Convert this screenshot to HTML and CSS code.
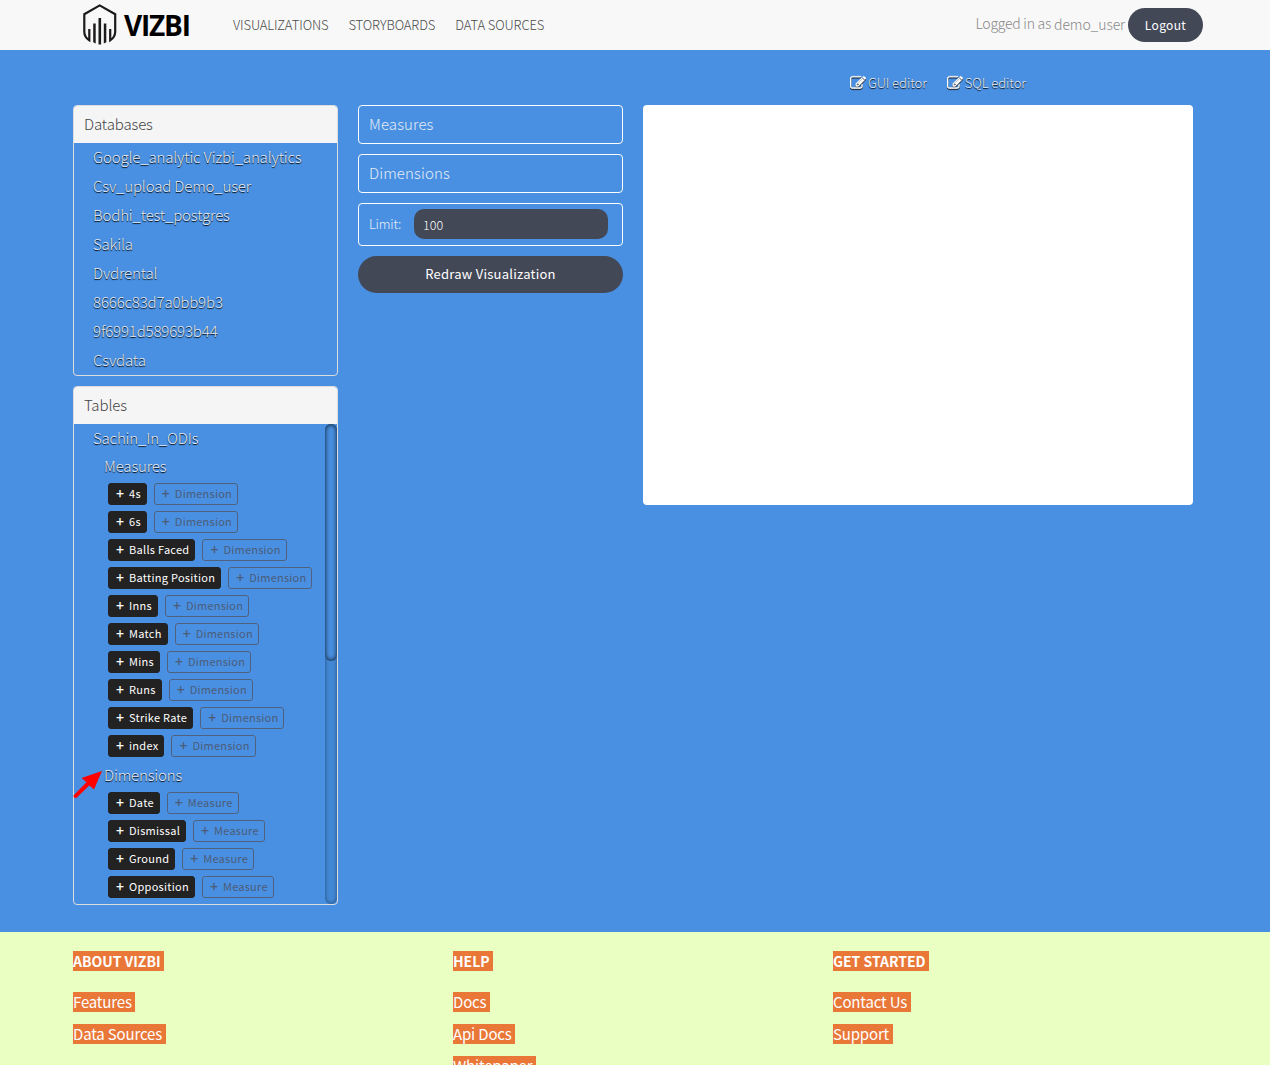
FILE: index.html
```html
<!DOCTYPE html>
<html lang="en">
<head>
<meta charset="utf-8">
<title>VIZBI</title>
<link rel="stylesheet" href="styles.css">
</head>
<body>
<svg class="defs" width="0" height="0">
  <symbol id="edit" viewBox="0 0 1792 1792"><path d="M888 1184l116-116-152-152-116 116v56h96v96h56zm440-720q-16-16-33 1l-350 350q-17 17-1 33t33-1l350-350q17-17 1-33zm80 594v190q0 119-84.500 203.500t-203.500 84.500h-832q-119 0-203.500-84.500t-84.500-203.500v-832q0-119 84.500-203.500t203.500-84.500h832q63 0 117 25 15 7 18 23 3 17-9 29l-49 49q-14 14-32 8-23-6-45-6h-832q-66 0-113 47t-47 113v832q0 66 47 113t113 47h832q66 0 113-47t47-113v-126q0-13 9-22l64-64q15-15 35-7t20 29zm-96-738l288 288-672 672h-288v-288zm444 132l-92 92-288-288 92-92q28-28 68-28t68 28l152 152q28 28 28 68t-28 68z"/></symbol>
</svg>
<header class="topbar">
  <div class="container topbar-inner">
    <a class="brand">
      <svg class="brand-mark" width="34" height="41" viewBox="0 0 34 41">
        <path d="M6.300 25v11.300Q1.500 33.500 1.300 28V10.200L16.700 1.400 32.200 10.200V28Q32 33.500 27.200 36.300V25" fill="none" stroke="#1d1a1b" stroke-width="2.200"/>
        <g fill="#1d1a1b"><path d="M10.200 19.500h2.500v20l-2.500-1.300z"/><path d="M15.500 14h2.600v26.500h-2.600z"/><path d="M20.800 19.500h2.500v18.700l-2.500 1.300z"/></g>
      </svg>
      <span class="brand-name">VIZBI</span>
    </a>
    <nav class="menu"><a>VISUALIZATIONS</a><a>STORYBOARDS</a><a>DATA SOURCES</a></nav>
    <div class="account"><span class="status">Logged in as</span><span class="user">demo_user</span><button class="pill logout">Logout</button></div>
  </div>
</header>
<main class="workspace">
  <div class="container">
    <div class="editors">
      <a><svg class="icon"><use href="#edit"/></svg>GUI editor</a>
      <a><svg class="icon"><use href="#edit"/></svg>SQL editor</a>
    </div>
    <div class="columns">
      <div class="side">
        <section class="panel">
          <h2>Databases</h2>
          <ul class="links">
            <li>Google_analytic Vizbi_analytics</li><li>Csv_upload Demo_user</li><li>Bodhi_test_postgres</li><li>Sakila</li><li>Dvdrental</li><li>8666c83d7a0bb9b3</li><li>9f6991d589693b44</li><li>Csvdata</li>
          </ul>
        </section>
        <section class="panel tables">
          <h2>Tables</h2>
          <div class="scroller">
            <div class="tree">
              <div class="table-name">Sachin_In_ODIs</div>
              <div class="group">Measures</div>
              <div class="field"><b>4s</b><i>Dimension</i></div>
              <div class="field"><b>6s</b><i>Dimension</i></div>
              <div class="field"><b>Balls Faced</b><i>Dimension</i></div>
              <div class="field"><b>Batting Position</b><i>Dimension</i></div>
              <div class="field"><b>Inns</b><i>Dimension</i></div>
              <div class="field"><b>Match</b><i>Dimension</i></div>
              <div class="field"><b>Mins</b><i>Dimension</i></div>
              <div class="field"><b>Runs</b><i>Dimension</i></div>
              <div class="field"><b>Strike Rate</b><i>Dimension</i></div>
              <div class="field"><b>index</b><i>Dimension</i></div>
              <div class="group second">Dimensions</div>
              <div class="field"><b>Date</b><i>Measure</i></div>
              <div class="field"><b>Dismissal</b><i>Measure</i></div>
              <div class="field"><b>Ground</b><i>Measure</i></div>
              <div class="field"><b>Opposition</b><i>Measure</i></div>
            </div>
            <div class="track"><div class="thumb"></div></div>
          </div>
          <svg class="arrow" width="32" height="30" viewBox="0 0 32 30"><path d="M29 1L8.500 8l5 4.200L.5 25.500q-.300 2.500 2.800 2.500L16.300 15.500l4.700 4z" fill="#f00"/></svg>
        </section>
      </div>
      <div class="controls">
        <div class="drop">Measures</div>
        <div class="drop">Dimensions</div>
        <label class="limit"><span>Limit:</span><input value="100"></label>
        <button class="pill redraw">Redraw Visualization</button>
      </div>
      <div class="canvas"></div>
    </div>
  </div>
</main>
<footer class="footer">
  <div class="container footer-grid">
    <div><h3><mark>ABOUT VIZBI</mark></h3><p><mark>Features</mark></p><p><mark>Data Sources</mark></p></div>
    <div><h3><mark>HELP</mark></h3><p><mark>Docs</mark></p><p><mark>Api Docs</mark></p><p><mark>Whitepaper</mark></p></div>
    <div><h3><mark>GET STARTED</mark></h3><p><mark>Contact Us</mark></p><p><mark>Support</mark></p></div>
  </div>
</footer>
</body>
</html>
```
FILE: styles.css
```css
* { box-sizing: border-box; }
body { margin: 0; height: 1065px; overflow: hidden; background: #eaffc2; font-family: "Noto Sans CJK SC", sans-serif; font-weight: 300; display: flex; flex-direction: column; }
.defs { position: absolute; }
h2, h3, p, ul { margin: 0; padding: 0; list-style: none; }
button, input { font-family: inherit; border: 0; margin: 0; }
.container { width: 1120px; margin-left: 73px; }
.topbar { height: 50px; flex: none; background: #f8f8f8; }
.topbar-inner { display: flex; align-items: center; height: 50px; }
.brand { display: flex; align-items: center; gap: 7px; margin-left: 10px; width: 150px; height: 50px; }
.brand-mark { margin-top: -1px; }
.brand-name { font-family: "Open Sans", "Noto Sans", sans-serif; font-size: 28px; font-weight: 700; line-height: 48px; color: #000; letter-spacing: -1.2px; }
.menu { display: flex; gap: 20px; font-size: 13px; line-height: 50px; color: #4a4a4a; letter-spacing: -.11px; }
.account { display: flex; align-items: center; margin-left: auto; margin-right: -10px; font-size: 14px; color: #888; line-height: 20px; }
.status { margin-right: 3px; padding-bottom: 4px; letter-spacing: -.25px; }
.user { margin-right: 3px; padding-bottom: 2px; letter-spacing: -.1px; }
.pill { background: #434857; color: #fff; border-radius: 19px; font-weight: 400; padding: 0; text-align: center; }
.logout { width: 75px; height: 34px; font-size: 12px; letter-spacing: .35px; padding-bottom: 1px; }
.workspace { height: 882px; flex: none; background: #4990e2; }
.editors { display: flex; gap: 20px; margin-left: 777px; height: 55px; padding-top: 10px; align-items: center; font-size: 13px; line-height: 20px; letter-spacing: -.05px; color: #e4ecf6; text-shadow: 0 1px 1px #000; }
.editors a { display: flex; align-items: center; }
.icon { width: 16px; height: 16px; margin-right: 2px; fill: #fff; stroke: #fff; stroke-width: 40; filter: drop-shadow(0 1px 0 #111); }
.columns { display: grid; grid-template-columns: 265px 265px 550px; gap: 20px; align-items: start; }
.side { display: grid; gap: 10px; }
.panel { border: 1px solid #ddd; border-radius: 4px; position: relative; }
.panel h2 { height: 37px; background: #f5f5f5; border-radius: 3px 3px 0 0; font-size: 15px; font-weight: 300; line-height: 35px; padding-left: 10px; color: #444; letter-spacing: -.12px; }
.links li, .table-name { height: 29px; line-height: 27px; padding-left: 19px; }
.links, .table-name, .group { font-size: 15px; letter-spacing: -.15px; color: #e4ecf6; text-shadow: 0 1px 1px #000; }
.tables { height: 519px; }
.scroller { display: flex; justify-content: space-between; height: 480px; }
.group { height: 30px; line-height: 26px; padding-left: 30px; }
.second { line-height: 28px; height: 31px; margin-top: -2px; }
.field { display: flex; gap: 7px; height: 22px; margin: 0 0 6px 34px; font-size: 11px; line-height: 18px; letter-spacing: .28px; white-space: nowrap; }
.field b, .field i { display: flex; border: 1px solid #222; border-radius: 3px; padding: 0 5px 0 6px; font-style: normal; font-weight: 400; }
.field b { background: #222; color: #fff; }
.field i { border-color: #50617f; color: #4c5c78; letter-spacing: .23px; }
.field b::before, .field i::before { content: "+"; width: 13px; margin-left: 1px; font-size: 14px; font-weight: 500; line-height: 19px; letter-spacing: 0; }
.track { width: 12px; height: 480px; border-radius: 6px; background: #4288d6; box-shadow: inset 0 0 4px rgba(0,0,0,.45); }
.thumb { height: 237px; border-radius: 6px; background: #4990e2; box-shadow: inset 0 0 5px rgba(0,0,0,.9); }
.arrow { position: absolute; left: -1px; top: 383px; }
.controls { display: grid; gap: 10px; }
.drop, .limit { border: 1px solid #fff; border-radius: 4px; height: 39px; padding-left: 10px; color: #e4ecf6; font-size: 15px; line-height: 35px; letter-spacing: .12px; }
.limit { display: flex; align-items: center; height: 43px; font-size: 13px; letter-spacing: -.2px; }
.limit span { width: 45px; padding-bottom: 2px; }
.limit input { width: 194px; height: 30px; margin-bottom: 1px; border-radius: 10px; background: #434857; color: #fff; padding: 1px 9px 0; font-size: 12.500px; font-weight: 300; }
.redraw { width: 265px; height: 37px; font-size: 13px; letter-spacing: .25px; padding-bottom: 2px; }
.canvas { height: 400px; border-radius: 4px; background: #fff; }
.footer { height: 133px; overflow: hidden; background: #eaffc2; }
.footer-grid { display: grid; grid-template-columns: repeat(3, 380px); padding-top: 19px; }
.footer h3, .footer p { height: 20px; display: flex; font-size: 14px; line-height: 20px; font-weight: 700; letter-spacing: -.02px; }
.footer h3 { margin-bottom: 21px; }
.footer p { margin-bottom: 12px; font-size: 15px; font-weight: 400; letter-spacing: -.17px; }
mark { height: 20px; background: #e97738; color: #fff; padding-right: 3.500px; }
```
